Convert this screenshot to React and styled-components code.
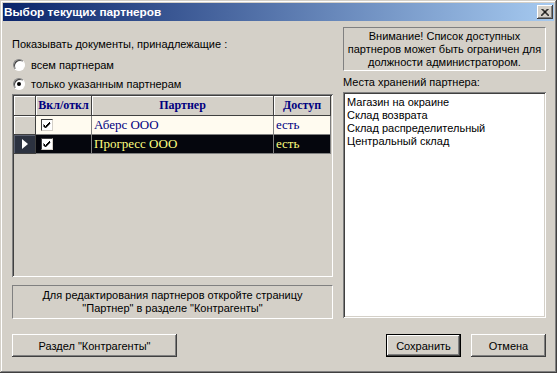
import React from 'react'
import styled, { createGlobalStyle } from 'styled-components'

const GlobalStyle = createGlobalStyle`
    html, body {
        margin: 0;
        padding: 0;
        background: #d4d0c8;
    }
    body {
        font-family: 'Liberation Sans', Arial, sans-serif;
        font-size: 11px;
        color: #000;
    }
`

const raised = `
    box-shadow: inset -1px -1px #404040, inset 1px 1px #fff,
        inset -2px -2px #808080, inset 2px 2px #d4d0c8;
`
const sunken = `
    box-shadow: inset 1px 1px #808080, inset -1px -1px #fff,
        inset 2px 2px #404040, inset -2px -2px #d4d0c8;
`

const Window = styled.div`
    box-sizing: border-box;
    width: 557px;
    height: 373px;
    padding: 3px;
    background: #d4d0c8;
    box-shadow: inset -1px -1px #404040, inset 1px 1px #d4d0c8,
        inset -2px -2px #808080, inset 2px 2px #fff;
    display: flex;
    flex-direction: column;
`
const TitleBar = styled.div`
    height: 18px;
    display: flex;
    align-items: center;
    justify-content: space-between;
    padding: 0 1px 0 1px;
    background: linear-gradient(to right, #0a246a, #a6caf0);
`
const Title = styled.span`
    color: #fff;
    font-weight: bold;
    font-size: 11.8px;
    line-height: 18px;
    white-space: nowrap;
`
const CloseButton = styled.div`
    width: 16px;
    height: 14px;
    background: #d4d0c8;
    ${raised}
    display: flex;
    align-items: center;
    justify-content: center;
`
const Body = styled.div`
    flex: 1;
    display: flex;
    gap: 10px;
    padding: 0 8px 0 9px;
`
const Column = styled.div`
    width: ${p => p.width}px;
    display: flex;
    flex-direction: column;
    padding-top: ${p => p.top}px;
`
const Label = styled.div`
    line-height: 13px;
    white-space: nowrap;
    margin-top: ${p => p.mt || 0}px;
`
const RadioRow = styled.label`
    height: 19px;
    display: flex;
    align-items: center;
    gap: 6px;
    padding-left: 1px;
    margin-top: ${p => p.mt || 0}px;
`
const RadioCircle = styled.span`
    box-sizing: border-box;
    width: 12px;
    height: 12px;
    border-radius: 50%;
    background: #fff;
    border: 1px solid;
    border-color: #808080 #fff #fff #808080;
    box-shadow: inset 1px 1px #404040;
    display: flex;
    align-items: center;
    justify-content: center;

    &::after {
        content: '';
        width: 4px;
        height: 4px;
        border-radius: 50%;
        background: ${p => (p.checked ? '#000' : 'transparent')};
    }
`
const GridFrame = styled.div`
    box-sizing: border-box;
    height: 183px;
    margin-top: 1px;
    padding: 2px;
    background: #d4d0c8;
    ${sunken}
`
const GridRow = styled.div`
    display: grid;
    grid-template-columns: 22px 56px 182px 57px;
    height: ${p => p.h}px;
`
const HeadCell = styled.div`
    box-sizing: border-box;
    background: #d4d0c8;
    border-right: 1px solid #404040;
    border-bottom: 1px solid #404040;
    box-shadow: inset 1px 1px #fff;
    display: flex;
    align-items: center;
    justify-content: center;
    font-family: 'Liberation Serif', 'Times New Roman', serif;
    font-weight: bold;
    font-size: 12px;
    color: #000080;
    white-space: nowrap;
    overflow: hidden;
`
const Indicator = styled.div`
    box-sizing: border-box;
    background: ${p => (p.active ? '#2c3240' : '#d4d0c8')};
    border-right: 1px solid #404040;
    border-bottom: 1px solid #404040;
    box-shadow: inset 1px 1px ${p => (p.active ? '#5a6070' : '#fff')};
    display: flex;
    align-items: center;
    justify-content: center;
`
const Cell = styled.div`
    box-sizing: border-box;
    background: ${p => (p.selected ? '#05060d' : '#fffbf0')};
    color: ${p => (p.selected ? '#ffff80' : '#000080')};
    border-right: 1px solid #808080;
    border-bottom: 1px solid #808080;
    display: flex;
    align-items: center;
    padding-left: ${p => p.pl || 2}px;
    font-family: 'Liberation Serif', 'Times New Roman', serif;
    font-size: 13px;
    white-space: nowrap;
`
const CheckBox = styled.span`
    box-sizing: border-box;
    width: 12px;
    height: 12px;
    background: #fff;
    border: 1px solid;
    border-color: #404040 #d4d0c8 #d4d0c8 #404040;
    display: flex;
    align-items: center;
    justify-content: center;
`
const InfoBox = styled.div`
    box-sizing: border-box;
    height: ${p => p.h}px;
    margin-top: ${p => p.mt || 0}px;
    border: 1px solid;
    border-color: #808080 #fff #fff #808080;
    display: flex;
    flex-direction: column;
    align-items: center;
    justify-content: center;
    text-align: center;
    line-height: 13px;
`
const ListBox = styled.div`
    box-sizing: border-box;
    height: 226px;
    margin-top: 3px;
    padding: 4px 4px;
    background: #fff;
    ${sunken}
`
const ListItem = styled.div`
    line-height: 13px;
    white-space: nowrap;
`
const ButtonRow = styled.div`
    display: flex;
    justify-content: ${p => p.justify || 'flex-start'};
    gap: 10px;
    margin-top: ${p => p.mt}px;
`
const Button = styled.button`
    box-sizing: border-box;
    width: ${p => p.w}px;
    height: 23px;
    padding: 0;
    background: #d4d0c8;
    border: ${p => (p.primary ? '1px solid #000' : 'none')};
    ${raised}
    font-family: 'Liberation Sans', Arial, sans-serif;
    font-size: 11px;
    color: #000;
`

const partners = [
    { name: 'Аберс ООО', access: 'есть', selected: false },
    { name: 'Прогресс ООО', access: 'есть', selected: true },
]

const stores = ['Магазин на окраине', 'Склад возврата', 'Склад распределительный', 'Центральный склад']

const Check = () => (
    <svg width="8" height="8" viewBox="0 0 8 8">
        <path d="M0.5 3.5 L2.5 5.5 L7 1 M0.5 4.5 L2.5 6.5 L7 2 M0.5 5 L2.5 7 L7 2.5" stroke="#000" strokeWidth="1" fill="none" />
    </svg>
)

export default function App() {
    return (
        <>
            <GlobalStyle />
            <Window>
                <TitleBar>
                    <Title>Выбор текущих партнеров</Title>
                    <CloseButton>
                        <svg width="8" height="7" viewBox="0 0 8 7">
                            <path d="M0.5 0 L7.5 7 M1.5 0 L8.5 7 M7.5 0 L0.5 7 M6.5 0 L-0.5 7" stroke="#000" strokeWidth="1" />
                        </svg>
                    </CloseButton>
                </TitleBar>
                <Body>
                    <Column width={321} top={17}>
                        <Label>Показывать документы, принадлежащие :</Label>
                        <RadioRow mt={4}>
                            <RadioCircle />
                            всем партнерам
                        </RadioRow>
                        <RadioRow>
                            <RadioCircle checked />
                            только указанным партнерам
                        </RadioRow>
                        <GridFrame>
                            <GridRow h={20}>
                                <HeadCell />
                                <HeadCell>Вкл/откл</HeadCell>
                                <HeadCell>Партнер</HeadCell>
                                <HeadCell>Доступ</HeadCell>
                            </GridRow>
                            {partners.map(p => (
                                <GridRow h={19} key={p.name}>
                                    <Indicator active={p.selected}>
                                        {p.selected && (
                                            <svg width="6" height="10" viewBox="0 0 6 10">
                                                <path d="M0 0 L6 5 L0 10 Z" fill="#fff" />
                                            </svg>
                                        )}
                                    </Indicator>
                                    <Cell selected={p.selected} pl={5}>
                                        <CheckBox>
                                            <Check />
                                        </CheckBox>
                                    </Cell>
                                    <Cell selected={p.selected}>{p.name}</Cell>
                                    <Cell selected={p.selected}>{p.access}</Cell>
                                </GridRow>
                            ))}
                        </GridFrame>
                        <InfoBox h={34} mt={8}>
                            <div>Для редактирования партнеров откройте страницу</div>
                            <div>"Партнер" в разделе "Контрагенты"</div>
                        </InfoBox>
                        <ButtonRow mt={15}>
                            <Button w={165}>Раздел "Контрагенты"</Button>
                        </ButtonRow>
                    </Column>
                    <Column width={203} top={6}>
                        <InfoBox h={44}>
                            <div>Внимание! Список доступных</div>
                            <div>партнеров может быть ограничен для</div>
                            <div>должности администратором.</div>
                        </InfoBox>
                        <Label mt={5}>Места хранений партнера:</Label>
                        <ListBox>
                            {stores.map(s => (
                                <ListItem key={s}>{s}</ListItem>
                            ))}
                        </ListBox>
                        <ButtonRow mt={16} justify="flex-end">
                            <Button w={75} primary>Сохранить</Button>
                            <Button w={75}>Отмена</Button>
                        </ButtonRow>
                    </Column>
                </Body>
            </Window>
        </>
    )
}
